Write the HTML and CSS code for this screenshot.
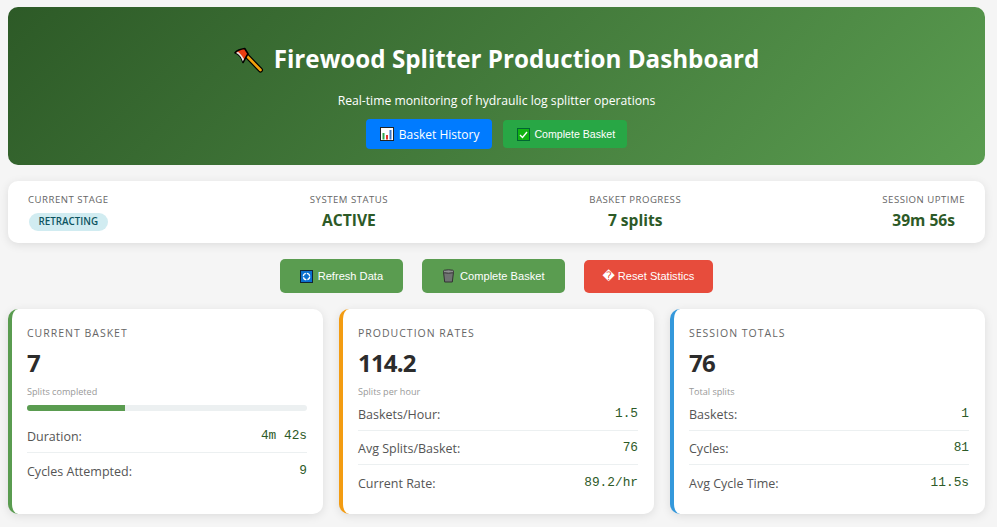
FILE: index.html
```html
<!DOCTYPE html>
<html lang="en">
<head>
    <meta charset="UTF-8">
    <meta name="viewport" content="width=device-width, initial-scale=1.0">
    <title>Firewood Splitter Production Dashboard</title>
    <link rel="stylesheet" href="styles.css">
</head>
<body>
    <header class="header">
        <h1 class="title">
            <svg class="axe" viewBox="0 0 30 26" width="30" height="26">
                <path d="M11 7 L26.5 23" stroke="#000" stroke-width="5" stroke-linecap="round"/>
                <path d="M11 7 L26.5 23" stroke="#f2a20c" stroke-width="2.6" stroke-linecap="round"/>
                <path d="M1 5.7 C3 3.5 7 2 10.7 1.5 L14 6.7 L9 15.5 C8 11 5 7 1 5.7 Z" fill="#ea3d12" stroke="#000" stroke-width="1.6" stroke-linejoin="round"/>
                <path d="M2 6 C5 7 8 11 8.8 14.6 L10 12 C8 9 6 6.5 4 4.8 Z" fill="#ece8e8"/>
            </svg>
            <span>Firewood Splitter Production Dashboard</span>
        </h1>
        <p class="subtitle">Real-time monitoring of hydraulic log splitter operations</p>
        <div class="header-actions">
            <a class="btn-history">
                <svg class="icon" viewBox="0 0 14 14" width="14" height="14">
                    <rect x="0.5" y="0.5" width="13" height="13" fill="#fff" stroke="#222"/>
                    <rect x="2.5" y="6" width="2" height="6.5" fill="#2fa84f"/>
                    <rect x="6" y="8" width="2" height="4.5" fill="#e5352b"/>
                    <rect x="9.5" y="3" width="2" height="9.5" fill="#3a78c9"/>
                </svg>
                Basket History
            </a>
            <button class="btn-complete-top">
                <svg class="icon" viewBox="0 0 13 13" width="13" height="13">
                    <rect x="0.5" y="0.5" width="12" height="12" fill="#12b312" stroke="#063"/>
                    <path d="M3 7 L5.5 9.5 L10 4" fill="none" stroke="#fff" stroke-width="1.4"/>
                </svg>
                Complete Basket
            </button>
        </div>
    </header>

    <section class="status-bar">
        <div class="status-item">
            <div class="status-label">Current Stage</div>
            <span class="badge">RETRACTING</span>
        </div>
        <div class="status-item">
            <div class="status-label">System Status</div>
            <div class="status-value">ACTIVE</div>
        </div>
        <div class="status-item">
            <div class="status-label">Basket Progress</div>
            <div class="status-value">7 splits</div>
        </div>
        <div class="status-item">
            <div class="status-label">Session Uptime</div>
            <div class="status-value">39m 56s</div>
        </div>
    </section>

    <div class="controls">
        <button class="btn btn-green">
            <svg class="icon" viewBox="0 0 13 13" width="13" height="13">
                <rect x="0.5" y="0.5" width="12" height="12" fill="#0a6fd0" stroke="#123"/>
                <circle cx="6.5" cy="6.5" r="3.2" fill="none" stroke="#fff" stroke-width="1.3" stroke-dasharray="4 1"/>
            </svg>
            Refresh Data
        </button>
        <button class="btn btn-green">
            <svg class="icon" viewBox="0 0 13 14" width="13" height="14">
                <path d="M1.5 3 H11.5 L10.3 13 H2.7 Z" fill="#6f7272" stroke="#333"/>
                <ellipse cx="6.5" cy="2.5" rx="5.5" ry="1.7" fill="#8d9090" stroke="#333"/>
            </svg>
            Complete Basket
        </button>
        <button class="btn btn-red"><span class="bad-char">&#xFFFD;</span> Reset Statistics</button>
    </div>

    <section class="cards">
        <div class="card card-green">
            <h3 class="card-title">Current Basket</h3>
            <div class="big-number">7</div>
            <div class="card-note">Splits completed</div>
            <div class="progress"><div class="progress-fill" style="width: 35%"></div></div>
            <div class="row"><span class="row-label">Duration:</span><span class="row-value">4m 42s</span></div>
            <div class="row"><span class="row-label">Cycles Attempted:</span><span class="row-value">9</span></div>
        </div>
        <div class="card card-orange">
            <h3 class="card-title">Production Rates</h3>
            <div class="big-number">114.2</div>
            <div class="card-note">Splits per hour</div>
            <div class="row"><span class="row-label">Baskets/Hour:</span><span class="row-value">1.5</span></div>
            <div class="row"><span class="row-label">Avg Splits/Basket:</span><span class="row-value">76</span></div>
            <div class="row"><span class="row-label">Current Rate:</span><span class="row-value">89.2/hr</span></div>
        </div>
        <div class="card card-blue">
            <h3 class="card-title">Session Totals</h3>
            <div class="big-number">76</div>
            <div class="card-note">Total splits</div>
            <div class="row"><span class="row-label">Baskets:</span><span class="row-value">1</span></div>
            <div class="row"><span class="row-label">Cycles:</span><span class="row-value">81</span></div>
            <div class="row"><span class="row-label">Avg Cycle Time:</span><span class="row-value">11.5s</span></div>
        </div>
    </section>
</body>
</html>
```

FILE: styles.css
```css
body {
    font-family: "Open Sans", "Noto Sans", sans-serif;
    background-color: #f5f5f5;
    color: #333;
    margin: 0;
    padding: 7px 12px 13px 8px;
}

.header {
    height: 158px;
    box-sizing: border-box;
    padding-top: 30px;
    border-radius: 10px;
    background: linear-gradient(135deg, #2d5a27, #5a9c50);
    color: #fff;
    text-align: center;
}

.title {
    margin: 0;
    font-size: 24.2px;
    line-height: 44px;
    font-weight: 700;
    display: flex;
    justify-content: center;
    align-items: center;
    gap: 10px;
}

.axe {
    margin-top: 1px;
}

.subtitle {
    margin: 10px 0 0;
    font-size: 12.2px;
    line-height: 20px;
}

.header-actions {
    margin-top: 8px;
    display: flex;
    justify-content: center;
    align-items: center;
    gap: 11px;
}

.icon {
    vertical-align: -2px;
    margin-right: 2px;
}

.btn-history {
    height: 30px;
    padding: 0 13px 0 14px;
    display: flex;
    align-items: center;
    gap: 3px;
    background: #007bff;
    border-radius: 4px;
    font-size: 12px;
}

.btn-complete-top {
    height: 28px;
    padding: 0 12px 0 14px;
    display: flex;
    align-items: center;
    gap: 2px;
    background: #28a745;
    color: #fff;
    border: none;
    border-radius: 4px;
    font-family: "Liberation Sans", sans-serif;
    font-size: 10.6px;
    font-weight: 400;
}

.status-bar {
    margin-top: 16px;
    height: 62px;
    box-sizing: border-box;
    padding: 12px 20px 0;
    display: flex;
    justify-content: space-between;
    background: #fff;
    border-radius: 10px;
    box-shadow: 0 2px 10px rgba(0, 0, 0, 0.1);
}

.status-item {
    text-align: center;
}

.status-label {
    font-size: 9.6px;
    line-height: 13px;
    letter-spacing: 0.5px;
    text-transform: uppercase;
    color: #666;
}

.status-value {
    margin-top: 3px;
    font-size: 15.6px;
    line-height: 22px;
    font-weight: 700;
    color: #2d5a27;
}

.badge {
    display: inline-block;
    margin-top: 7px;
    padding: 0 10px;
    border-radius: 10px;
    background: #d1ecf1;
    color: #0c5460;
    font-size: 9.8px;
    line-height: 18px;
    font-weight: 600;
}

.controls {
    margin-top: 16px;
    display: flex;
    justify-content: center;
    align-items: center;
    gap: 19px;
}

.btn {
    height: 34px;
    padding: 0 20px;
    border: none;
    border-radius: 5px;
    color: #fff;
    font-family: "Liberation Sans", sans-serif;
    font-size: 11.1px;
    display: flex;
    align-items: center;
    gap: 3px;
}

.btn-green {
    background: #5a9c50;
}

.btn-red {
    height: 33px;
    padding: 0 19px;
    background: #e74c3c;
}

.bad-char {
    font-family: "DejaVu Sans", sans-serif;
    font-size: 12px;
}

.cards {
    margin-top: 16px;
    display: grid;
    grid-template-columns: repeat(3, 1fr);
    gap: 16px;
}

.card {
    height: 205px;
    box-sizing: border-box;
    padding: 15px 16px 0 15px;
    background: #fff;
    border-radius: 10px;
    border-left: 4px solid #5a9c50;
    box-shadow: 0 2px 10px rgba(0, 0, 0, 0.1);
}

.card-orange {
    border-left-color: #f39c12;
}

.card-blue {
    border-left-color: #3498db;
}

.card-title {
    margin: 0;
    font-size: 10.5px;
    line-height: 18px;
    font-weight: 400;
    letter-spacing: 1px;
    text-transform: uppercase;
    color: #666;
}

.big-number {
    margin-top: 6px;
    font-size: 24px;
    line-height: 30px;
    font-weight: 700;
    letter-spacing: -0.8px;
    color: #2c2c2c;
}

.card-note {
    margin-top: 8px;
    font-size: 9.1px;
    line-height: 11px;
    color: #999;
}

.progress {
    margin-top: 8px;
    height: 6px;
    border-radius: 3px;
    background: #ecf0f1;
    overflow: hidden;
}

.progress-fill {
    height: 100%;
    background: #5a9c50;
}

.progress + .row {
    margin-top: 8px;
}

.row {
    height: 34px;
    box-sizing: border-box;
    display: flex;
    justify-content: space-between;
    align-items: center;
    border-bottom: 1px solid #ecf0f1;
}

.row:last-child {
    border-bottom: none;
}

.row-label {
    padding-top: 2px;
    font-size: 12.5px;
    font-weight: 500;
    color: #555;
}

.row-value {
    font-family: "Liberation Mono", monospace;
    font-size: 12.8px;
    color: #2d5a27;
}
```
